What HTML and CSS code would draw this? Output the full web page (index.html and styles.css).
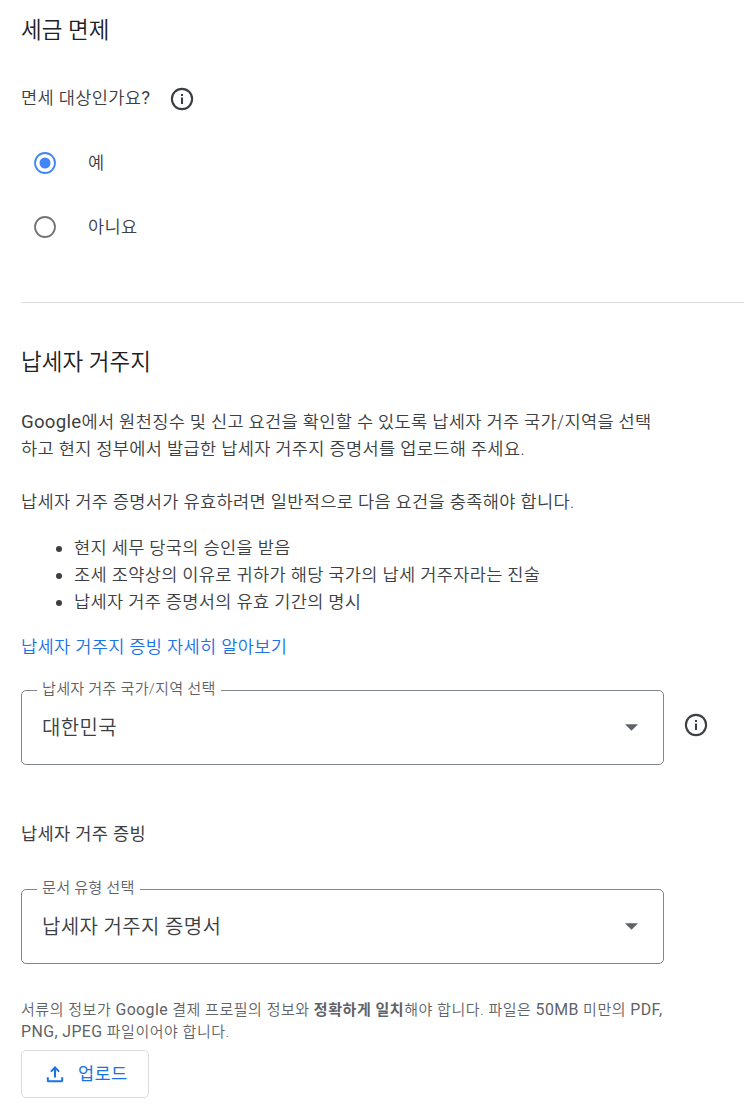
FILE: index.html
```html
<!DOCTYPE html>
<html lang="ko">
<head>
<meta charset="utf-8">
<title>세금 정보</title>
<link rel="stylesheet" href="styles.css">
</head>
<body>
<main class="page">
  <section class="exemption">
    <h2 class="heading">세금 면제</h2>
    <div class="question">
      <span class="prompt">면세 대상인가요<span class="latin">?</span></span>
      <svg class="info" viewBox="0 0 24 24"><circle cx="12" cy="12" r="10.1"/><path d="M12 10.6v6.3M12 7v2"/></svg>
    </div>
    <div class="option">
      <svg class="radio radio-on" viewBox="0 0 24 24"><circle cx="12" cy="12" r="10"/><circle class="dot" cx="12" cy="12" r="5.5"/></svg>
      <span>예</span>
    </div>
    <div class="option">
      <svg class="radio" viewBox="0 0 24 24"><circle cx="12" cy="12" r="10"/></svg>
      <span>아니요</span>
    </div>
  </section>
  <section class="residency">
    <h2 class="heading">납세자 거주지</h2>
    <p class="text"><span class="latin">Google</span>에서 원천징수 및 신고 요건을 확인할 수 있도록 납세자 거주 국가/지역을 선택<br>하고 현지 정부에서 발급한 납세자 거주지 증명서를 업로드해 주세요.</p>
    <p class="text">납세자 거주 증명서가 유효하려면 일반적으로 다음 요건을 충족해야 합니다.</p>
    <ul class="list">
      <li>현지 세무 당국의 승인을 받음</li>
      <li>조세 조약상의 이유로 귀하가 해당 국가의 납세 거주자라는 진술</li>
      <li>납세자 거주 증명서의 유효 기간의 명시</li>
    </ul>
    <a class="link">납세자 거주지 증빙 자세히 알아보기</a>
    <div class="field">
      <div class="select">
        <span class="label">납세자 거주 국가/지역 선택</span>
        <span class="value">대한민국</span>
        <svg class="arrow" viewBox="0 0 14 7"><path d="M0 0h14L7 7z"/></svg>
      </div>
      <svg class="info info-field" viewBox="0 0 24 24"><circle cx="12" cy="12" r="10.1"/><path d="M12 10.6v6.3M12 7v2"/></svg>
    </div>
    <h3 class="subheading">납세자 거주 증빙</h3>
    <div class="field field-document">
      <div class="select">
        <span class="label">문서 유형 선택</span>
        <span class="value">납세자 거주지 증명서</span>
        <svg class="arrow" viewBox="0 0 14 7"><path d="M0 0h14L7 7z"/></svg>
      </div>
    </div>
    <p class="hint">서류의 정보가 <span class="latin">Google</span> 결제 프로필의 정보와 <b>정확하게 일치</b>해야 합니다. 파일은 <span class="latin">50MB</span> 미만의 <span class="latin">PDF,</span><br><span class="latin">PNG, JPEG</span> 파일이어야 합니다.</p>
    <button class="upload">
      <svg class="upload-icon" viewBox="0 0 18 18"><path d="M9 12.6V2.6M4.9 6.6L9 2.5l4.1 4.1M1.8 12.2v3.2q0 .9.9.9h12.6q.9 0 .9-.9v-3.2"/></svg>
      <span>업로드</span>
    </button>
  </section>
</main>
</body>
</html>
```

FILE: styles.css
```css
body {
  margin: 0;
  background: #fff;
  color: #3c4043;
  font: 350 17.6px/27px Roboto, "Noto Sans CJK KR", sans-serif;
  letter-spacing: 0.33px;
}
.page { padding-left: 21px; }
.heading {
  margin: 0;
  font-size: 22.5px;
  line-height: 32px;
  font-weight: 350;
  letter-spacing: 0.05px;
  color: #202124;
}
.exemption {
  height: 288px;
  padding-top: 14px;
  border-bottom: 1px solid #dadce0;
}
.question {
  display: flex;
  align-items: center;
  gap: 20px;
  height: 27px;
  margin: 39px 0 19px;
}
.info {
  width: 24px;
  height: 24px;
  fill: none;
  stroke: #3c4043;
  stroke-width: 2.1;
}
.info-field { margin-bottom: 6px; }
.option {
  display: flex;
  align-items: center;
  gap: 31px;
  height: 64px;
  padding-left: 12px;
}
.radio {
  width: 24px;
  height: 24px;
  fill: none;
  stroke: #757575;
  stroke-width: 1.8;
}
.radio-on { stroke: #4285f4; }
.dot { fill: #4285f4; stroke: none; }
.residency { padding-top: 43px; }
.text { margin: 31px 0 26px; }
.text + .text { margin: 0 0 18px; }
.latin { font-size: 1.06em; line-height: 1; font-weight: 400; letter-spacing: 0.27px; }
.list { margin: 0 0 19px; padding-left: 53px; }
.list li { height: 27px; }
.list li::marker { font-size: 18px; }
.link { display: block; color: #1a73e8; }
.field {
  display: flex;
  align-items: center;
  gap: 20px;
  margin-top: 29px;
}
.select {
  position: relative;
  box-sizing: border-box;
  display: flex;
  align-items: center;
  justify-content: space-between;
  width: 643px;
  height: 75px;
  padding: 0 25px 0 20px;
  border: 1px solid #80868b;
  border-radius: 5px;
}
.label {
  position: absolute;
  top: -13px;
  left: 15px;
  padding: 0 5px;
  background: #fff;
  color: #5f6368;
  font-size: 15.2px;
  line-height: 22px;
  letter-spacing: 0.18px;
}
.value { padding-top: 2px; font-size: 20px; letter-spacing: 0.35px; }
.arrow { width: 13px; height: 7px; fill: #5f6368; }
.subheading {
  margin: 56px 0 41px;
  font-size: 17.6px;
  line-height: 27px;
  font-weight: 400;
}
.field-document .value { padding-top: 1px; }
.hint {
  margin: 35px 0 7px;
  color: #5f6368;
  font-size: 15px;
  line-height: 22px;
  letter-spacing: 0.54px;
}
.hint .latin { letter-spacing: 0.4px; }
.upload {
  display: flex;
  align-items: center;
  gap: 14px;
  box-sizing: border-box;
  width: 128px;
  height: 48px;
  padding: 0 0 0 24px;
  border: 1px solid #dadce0;
  border-radius: 5px;
  background: #fff;
  color: #1a73e8;
  font: inherit;
  font-weight: 400;
  letter-spacing: inherit;
}
.upload-icon {
  width: 18px;
  height: 18px;
  fill: none;
  stroke: #1a73e8;
  stroke-width: 2;
}
```
